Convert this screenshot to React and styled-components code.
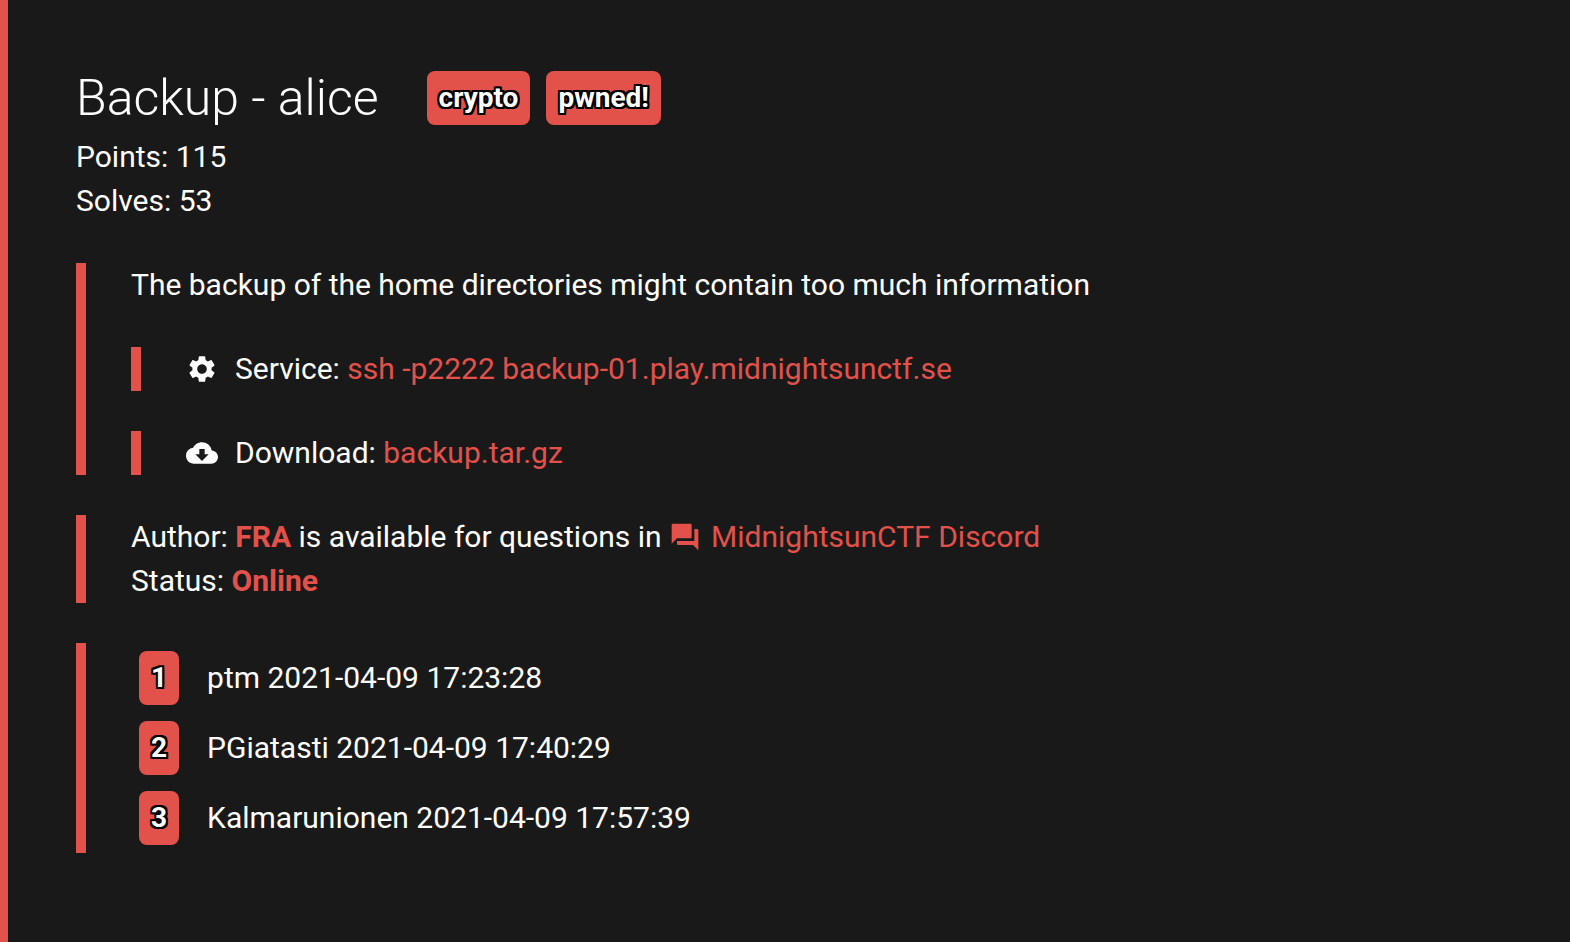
import React from "react";
import styled, { createGlobalStyle } from "styled-components";
import { MdSettings, MdCloudDownload, MdQuestionAnswer } from "react-icons/md";

const accent = "#e2514a";

const GlobalStyle = createGlobalStyle`
  * { box-sizing: border-box; }
  body {
    margin: 0;
    background: #191919;
    color: #fff;
    font: 400 30px/44px Roboto, sans-serif;
  }
`;

const Page = styled.main`
  min-height: 100vh;
  padding: 66px 76px 88px 68px;
  border-left: 8px solid ${accent};
`;

const Header = styled.header`
  display: flex;
  align-items: center;
  gap: 16px;
  margin-bottom: 5px;
`;

const Title = styled.h1`
  margin: 0 32px 0 0;
  font-size: 50px;
  line-height: 64px;
  font-weight: 300;
`;

const Badge = styled.span`
  display: inline-block;
  padding: 5px 12px;
  border-radius: 8px;
  background: ${accent};
  font-size: 28px;
  line-height: 44px;
  font-weight: 700;
  text-shadow: -2px -2px 0 #000, 2px -2px 0 #000, -2px 2px 0 #000, 2px 2px 0 #000,
    0 2px 0 #000, 0 -2px 0 #000, 2px 0 0 #000, -2px 0 0 #000;
`;

const Text = styled.p`
  margin: 0;
`;

const Quote = styled.section`
  display: flow-root;
  margin-top: 40px;
  padding-left: 45px;
  border-left: 10px solid ${accent};
`;

const Link = styled.a`
  color: ${accent};
  text-decoration: none;
`;

const Strong = styled.strong`
  color: ${accent};
  font-weight: 700;
`;

const IconSlot = styled.span`
  display: inline-flex;
  margin-right: ${(p) => (p.$inline ? "10px" : "17px")};
  vertical-align: -6px;
`;

const Solvers = styled.ol`
  margin: 0;
  padding: 8px;
  list-style: none;
  display: grid;
  gap: 16px;
`;

const Solver = styled.li`
  display: flex;
  align-items: center;
  gap: 28px;
`;

const solvers = [
  ["ptm", "2021-04-09 17:23:28"],
  ["PGiatasti", "2021-04-09 17:40:29"],
  ["Kalmarunionen", "2021-04-09 17:57:39"],
];

export default function App() {
  return (
    <>
      <GlobalStyle />
      <Page>
        <Header>
          <Title>Backup - alice</Title>
          <Badge>crypto</Badge>
          <Badge>pwned!</Badge>
        </Header>
        <Text>Points: 115</Text>
        <Text>Solves: 53</Text>
        <Quote>
          <Text>The backup of the home directories might contain too much information</Text>
          <Quote>
            <IconSlot><MdSettings size={32} /></IconSlot>
            Service: <Link href="ssh://backup-01.play.midnightsunctf.se:2222">ssh -p2222 backup-01.play.midnightsunctf.se</Link>
          </Quote>
          <Quote>
            <IconSlot><MdCloudDownload size={32} /></IconSlot>
            Download: <Link href="#backup.tar.gz">backup.tar.gz</Link>
          </Quote>
        </Quote>
        <Quote>
          <Text>
            Author: <Strong>FRA</Strong> is available for questions in{" "}
            <Link href="#discord">
              <IconSlot $inline><MdQuestionAnswer size={32} /></IconSlot>
              MidnightsunCTF Discord
            </Link>
          </Text>
          <Text>Status: <Strong>Online</Strong></Text>
        </Quote>
        <Quote>
          <Solvers>
            {solvers.map(([name, time], i) => (
              <Solver key={name}>
                <Badge>{i + 1}</Badge>
                <span>{name} {time}</span>
              </Solver>
            ))}
          </Solvers>
        </Quote>
      </Page>
    </>
  );
}
